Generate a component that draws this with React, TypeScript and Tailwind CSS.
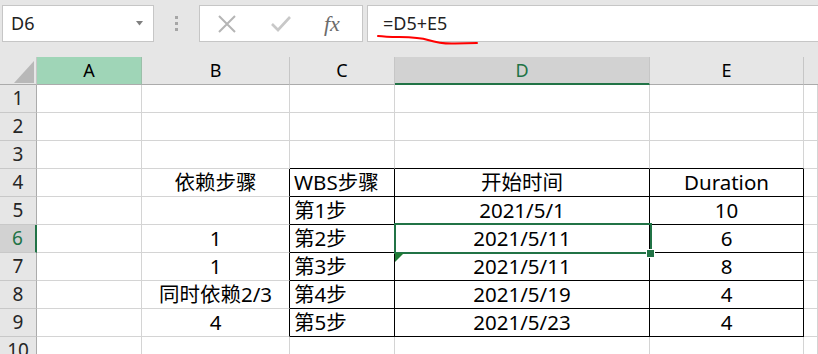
import React from "react";

const FONT = { fontFamily: '"Noto Sans", "Noto Sans CJK SC", sans-serif' };

type Row = { n: number; b: string; c: string; d: string; e: string };

const rows: Row[] = [
  { n: 1, b: "", c: "", d: "", e: "" },
  { n: 2, b: "", c: "", d: "", e: "" },
  { n: 3, b: "", c: "", d: "", e: "" },
  { n: 4, b: "依赖步骤", c: "WBS步骤", d: "开始时间", e: "Duration" },
  { n: 5, b: "", c: "第1步", d: "2021/5/1", e: "10" },
  { n: 6, b: "1", c: "第2步", d: "2021/5/11", e: "6" },
  { n: 7, b: "1", c: "第3步", d: "2021/5/11", e: "8" },
  { n: 8, b: "同时依赖2/3", c: "第4步", d: "2021/5/19", e: "4" },
  { n: 9, b: "4", c: "第5步", d: "2021/5/23", e: "4" },
  { n: 10, b: "", c: "", d: "", e: "" },
];

function Cell({
  children,
  align,
  rightBlack,
  bottomBlack,
}: {
  children?: React.ReactNode;
  align: "left" | "center";
  rightBlack?: boolean;
  bottomBlack?: boolean;
}) {
  return (
    <div
      className={[
        "h-[28px] bg-white border-r border-b border-[#d4d4d4] flex items-end pb-[1px] text-[20.5px] leading-[26px] text-black whitespace-nowrap overflow-visible",
        align === "center" ? "justify-center" : "justify-start pl-[4px]",
        rightBlack ? "border-r-black" : "",
        bottomBlack ? "border-b-black" : "",
      ].join(" ")}
    >
      {children}
    </div>
  );
}

function RowHeader({ n }: { n: number }) {
  const sel = n === 6;
  return (
    <div
      className={
        sel
          ? "h-[28px] bg-[#d2d2d2] border-b border-[#c8c8c8] border-r-2 border-r-[#217346] flex items-end justify-center pb-[1px] text-[19px] leading-[26px] text-[#217346]"
          : "h-[28px] bg-[#e6e6e6] border-b border-[#c8c8c8] border-r border-r-[#ababab] flex items-end justify-center pb-[1px] text-[19px] leading-[26px] text-[#262626]"
      }
    >
      {n}
    </div>
  );
}

export default function App() {
  return (
    <div
      className="w-[818px] h-[354px] overflow-hidden bg-[#e6e6e6] relative"
      style={FONT}
    >
      {/* Formula bar */}
      <div className="h-[57px] flex items-start pt-[5px]">
        <div className="ml-[2px] w-[152px] h-[37px] bg-white border border-[#c6c6c6] flex items-center justify-between pl-[8px] pr-[10px]">
          <span className="text-[18px] text-[#222]">D6</span>
          <svg width="7" height="5" viewBox="0 0 7 5">
            <path d="M0 0 L7 0 L3.5 4.5 Z" fill="#7f7f7f" />
          </svg>
        </div>
        <div className="w-[45px] h-[37px] flex flex-col items-center justify-center gap-[3px]">
          <div className="w-[3px] h-[3px] bg-[#a6a6a6]" />
          <div className="w-[3px] h-[3px] bg-[#a6a6a6]" />
          <div className="w-[3px] h-[3px] bg-[#a6a6a6]" />
        </div>
        <div className="w-[164px] h-[37px] bg-white border border-[#c6c6c6] flex items-center">
          <svg width="18" height="18" viewBox="0 0 18 18" className="ml-[18px]">
            <path d="M1 1 L17 17 M17 1 L1 17" stroke="#b5b5b5" strokeWidth="2" />
          </svg>
          <svg width="20" height="18" viewBox="0 0 20 18" className="ml-[35px]">
            <path d="M1 9 L7 15 L19 2" stroke="#c8c8c8" strokeWidth="2.6" fill="none" />
          </svg>
          <span
            className="ml-[33px] text-[22px] italic text-[#6b6b6b] leading-none"
            style={{ fontFamily: '"Liberation Serif", serif' }}
          >
            fx
          </span>
        </div>
        <div className="ml-[4px] flex-1 h-[37px] bg-white border border-[#c6c6c6] border-r-0 flex items-center pl-[15px]">
          <span className="text-[18px] text-[#222]">=D5+E5</span>
        </div>
      </div>

      {/* Red annotation underline */}
      <svg
        className="absolute left-0 top-0 pointer-events-none"
        width="818"
        height="60"
        viewBox="0 0 818 60"
      >
        <path
          d="M378 36 C 395 38, 415 36, 428 40 C 438 43, 445 44, 455 43.5 L 477 43"
          stroke="#ff0000"
          strokeWidth="2"
          fill="none"
          strokeLinecap="round"
        />
      </svg>

      {/* Sheet grid */}
      <div className="relative grid grid-cols-[37px_105px_148px_105px_255px_154px_14px]">
        {/* Column headers */}
        <div className="h-[28px] bg-[#e6e6e6] border-b border-[#ababab] border-r border-r-[#c6c6c6] flex items-end justify-end pr-[2px] pb-[1px]">
          <svg width="20" height="22" viewBox="0 0 20 22">
            <path d="M20 0 L20 22 L0 22 Z" fill="#b8b8b8" />
          </svg>
        </div>
        <div className="h-[28px] bg-[#9fd5b7] border-b border-[#ababab] border-r border-r-[#9bbfa9] flex items-end justify-center pb-[1px] text-[18px] leading-[26px] text-black">
          A
        </div>
        <div className="h-[28px] bg-[#e6e6e6] border-b border-[#ababab] border-r border-r-[#c6c6c6] flex items-end justify-center pb-[1px] text-[18px] leading-[26px] text-black">
          B
        </div>
        <div className="h-[28px] bg-[#e6e6e6] border-b border-[#ababab] border-r border-r-[#c6c6c6] flex items-end justify-center pb-[1px] text-[18px] leading-[26px] text-black">
          C
        </div>
        <div className="h-[28px] bg-[#d2d2d2] border-b-2 border-[#217346] border-r border-r-[#c6c6c6] flex items-end justify-center text-[18px] leading-[26px] text-[#217346]">
          D
        </div>
        <div className="h-[28px] bg-[#e6e6e6] border-b border-[#ababab] border-r border-r-[#c6c6c6] flex items-end justify-center pb-[1px] text-[18px] leading-[26px] text-black">
          E
        </div>
        <div className="h-[28px] bg-[#e6e6e6] border-b border-[#ababab]" />

        {rows.map((r) => {
          const inTable = r.n >= 4 && r.n <= 9;
          const aboveTable = r.n === 3;
          return (
            <React.Fragment key={r.n}>
              <RowHeader n={r.n} />
              <Cell align="center" />
              <Cell align="center" rightBlack={inTable}>
                {r.b}
              </Cell>
              <Cell align="left" rightBlack={inTable} bottomBlack={inTable || aboveTable}>
                {r.c}
              </Cell>
              <Cell align="center" rightBlack={inTable} bottomBlack={inTable || aboveTable}>
                {r.d}
              </Cell>
              <Cell align="center" rightBlack={inTable} bottomBlack={inTable || aboveTable}>
                {r.e}
              </Cell>
              <Cell align="center" />
            </React.Fragment>
          );
        })}

        {/* Active cell selection D6 */}
        <div className="absolute left-[394px] top-[166px] w-[258px] h-[31px] border-2 border-[#217346] pointer-events-none" />
        <div className="absolute left-[646px] top-[192px] w-[9px] h-[9px] bg-[#217346] border border-white pointer-events-none" />
        <svg
          className="absolute left-[395px] top-[196px] pointer-events-none"
          width="9"
          height="9"
          viewBox="0 0 9 9"
        >
          <path d="M0 0 L9 0 L0 9 Z" fill="#1e7b34" />
        </svg>
      </div>
    </div>
  );
}
